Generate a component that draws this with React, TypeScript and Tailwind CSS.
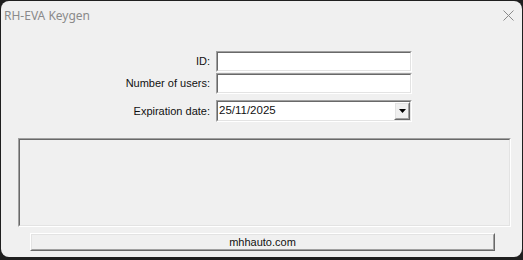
import React from 'react';

const Sunken: React.FC<{ className?: string; inner?: string; children?: React.ReactNode }> = ({ className = '', inner = 'bg-white', children }) => (
  <div className={`border border-t-[#a0a0a0] border-l-[#a0a0a0] border-b-white border-r-white ${className}`}>
    <div className={`h-full w-full border border-t-[#696969] border-l-[#696969] border-b-[#e3e3e3] border-r-[#e3e3e3] ${inner}`}>
      {children}
    </div>
  </div>
);

const Raised: React.FC<{ className?: string; children?: React.ReactNode }> = ({ className = '', children }) => (
  <div className={`border border-t-white border-l-white border-b-[#696969] border-r-[#696969] ${className}`}>
    <div className="flex h-full w-full items-center justify-center border border-t-[#e3e3e3] border-l-[#e3e3e3] border-b-[#a0a0a0] border-r-[#a0a0a0] bg-[#f0f0f0]">
      {children}
    </div>
  </div>
);

const App: React.FC = () => {
  const rows = [
    { label: 'ID:', value: '' },
    { label: 'Number of users:', value: '' },
  ];

  return (
    <div className="h-[260px] w-[523px] bg-[#1f1f1f] px-px pb-[3px] pt-px">
      <div
        className="flex h-full flex-col overflow-hidden rounded-[8px] bg-[#f0f0f0] text-[11px] text-[#111]"
        style={{ fontFamily: '"Liberation Sans", Arial, sans-serif' }}
      >
        <div className="flex h-[29px] shrink-0 items-center justify-between pl-[3px] pr-[8px]">
          <span className="text-[12px] text-[#8a8a8a]" style={{ fontFamily: '"Noto Sans", sans-serif' }}>
            RH-EVA Keygen
          </span>
          <svg width="11" height="11" viewBox="0 0 11 11" className="mb-[1px]">
            <path d="M0.5 0.5 L10.5 10.5 M10.5 0.5 L0.5 10.5" stroke="#8a8a8a" strokeWidth="1" fill="none" />
          </svg>
        </div>

        <div className="mt-[21px] flex flex-col">
          {rows.map((r, i) => (
            <div key={r.label} className={`flex items-center ${i > 0 ? 'mt-px' : ''}`}>
              <span className="w-[209px] text-right">{r.label}</span>
              <Sunken className="ml-[6px] h-[21px] w-[196px]" />
            </div>
          ))}
          <div className="mt-[6px] flex items-center">
            <span className="w-[209px] text-right">Expiration date:</span>
            <Sunken className="ml-[6px] h-[22px] w-[196px]">
              <div className="flex h-full items-center justify-between pl-px pr-0">
                <span className="text-[11.5px]">25/11/2025</span>
                <Raised className="h-[18px] w-[16px]">
                  <svg width="7" height="4" viewBox="0 0 7 4">
                    <path d="M0 0 H7 L3.5 4 Z" fill="#000" />
                  </svg>
                </Raised>
              </div>
            </Sunken>
          </div>
        </div>

        <Sunken className="ml-[17px] mt-[16px] h-[89px] w-[493px]" inner="bg-[#f0f0f0]" />

        <Raised className="ml-[29px] mt-[6px] h-[18px] w-[465px]">
          <span className="text-[11px]">mhhauto.com</span>
        </Raised>
      </div>
    </div>
  );
};

export default App;
